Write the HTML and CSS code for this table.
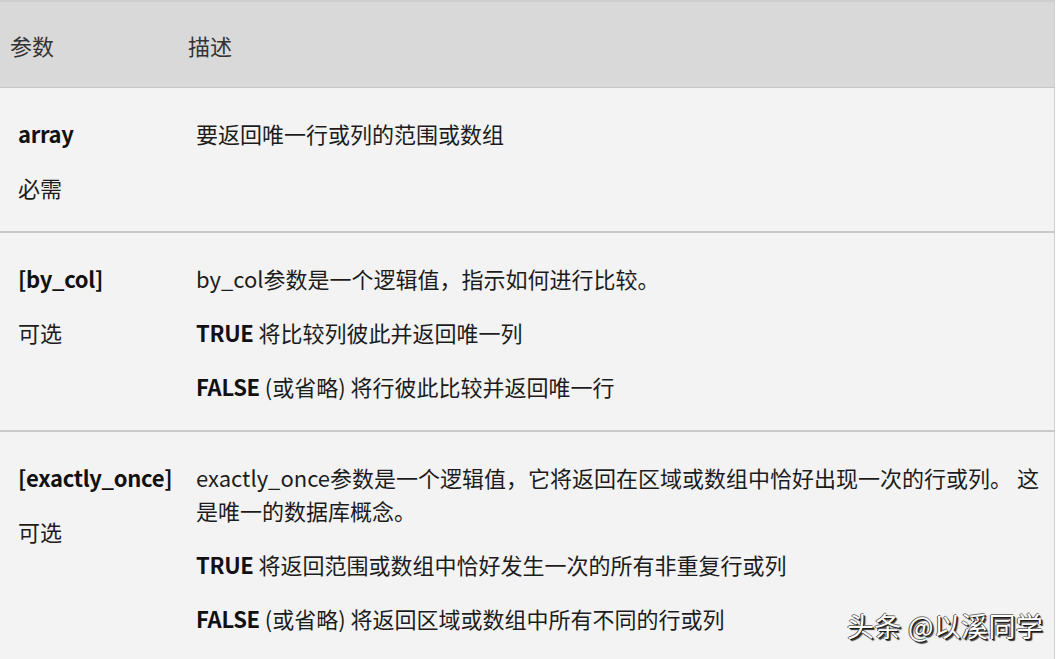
FILE: index.html
```html
<!DOCTYPE html>
<html lang="zh-CN">
<head>
<meta charset="utf-8">
<link rel="stylesheet" href="styles.css">
</head>
<body>
<div class="page">
  <table class="params">
    <thead>
      <tr>
        <th class="col-name">参数</th>
        <th class="col-desc">描述</th>
      </tr>
    </thead>
    <tbody>
      <tr>
        <td class="col-name">
          <p><b>array</b></p>
          <p>必需</p>
        </td>
        <td class="col-desc">
          <p>要返回唯一行或列的范围或数组</p>
        </td>
      </tr>
      <tr>
        <td class="col-name">
          <p><b>[by_col]</b></p>
          <p>可选</p>
        </td>
        <td class="col-desc">
          <p>by_col参数是一个逻辑值，指示如何进行比较。</p>
          <p><b>TRUE</b> 将比较列彼此并返回唯一列</p>
          <p><b>FALSE</b> (或省略) 将行彼此比较并返回唯一行</p>
        </td>
      </tr>
      <tr>
        <td class="col-name">
          <p><b>[exactly_once]</b></p>
          <p>可选</p>
        </td>
        <td class="col-desc">
          <p>exactly_once参数是一个逻辑值，它将返回在区域或数组中恰好出现一次的行或列。 这是唯一的数据库概念。</p>
          <p><b>TRUE</b> 将返回范围或数组中恰好发生一次的所有非重复行或列</p>
          <p><b>FALSE</b> (或省略) 将返回区域或数组中所有不同的行或列</p>
        </td>
      </tr>
    </tbody>
  </table>
  <div class="watermark">头条 @以溪同学</div>
</div>
</body>
</html>
```

FILE: styles.css
```css
html, body {
  margin: 0;
  padding: 0;
  background: #ffffff;
}
body {
  font-family: "Noto Sans CJK SC", "Noto Sans", sans-serif;
  font-size: 22px;
  color: #1c1c1c;
  width: 1061px;
  height: 659px;
  overflow: hidden;
}
.page {
  position: relative;
  width: 1061px;
  height: 659px;
  overflow: hidden;
}
.params {
  width: 1055px;
  border-collapse: collapse;
  border-top: 2px solid #cdcdcd;
  border-right: 1px solid #d0d0d0;
  background: #f3f3f3;
  table-layout: fixed;
}
.params th {
  background: #d9d9d9;
  height: 85px;
  padding: 0 0 0 10px;
  text-align: left;
  font-weight: normal;
  color: #333333;
  border-bottom: 1px solid #c6c6c6;
  line-height: 30px;
}
.params th.col-name {
  width: 168px;
}
.params td {
  vertical-align: top;
  padding: 29px 0 27px 18px;
  border-bottom: 2px solid #c9c9c9;
  line-height: 33px;
}
.params p {
  margin: 0;
}
.params p + p {
  margin-top: 21px;
}
.params b {
  font-weight: 700;
  color: #111111;
  letter-spacing: -0.3px;
}
.watermark {
  position: absolute;
  left: 847px;
  top: 608px;
  font-size: 27px;
  line-height: 36px;
  color: #ffffff;
  letter-spacing: 0.3px;
  text-shadow: 1px 1px 0 #1a1a1a, -1px 0 0 #555, 0 -1px 0 #777, 2px 2px 1px #333;
}
```
